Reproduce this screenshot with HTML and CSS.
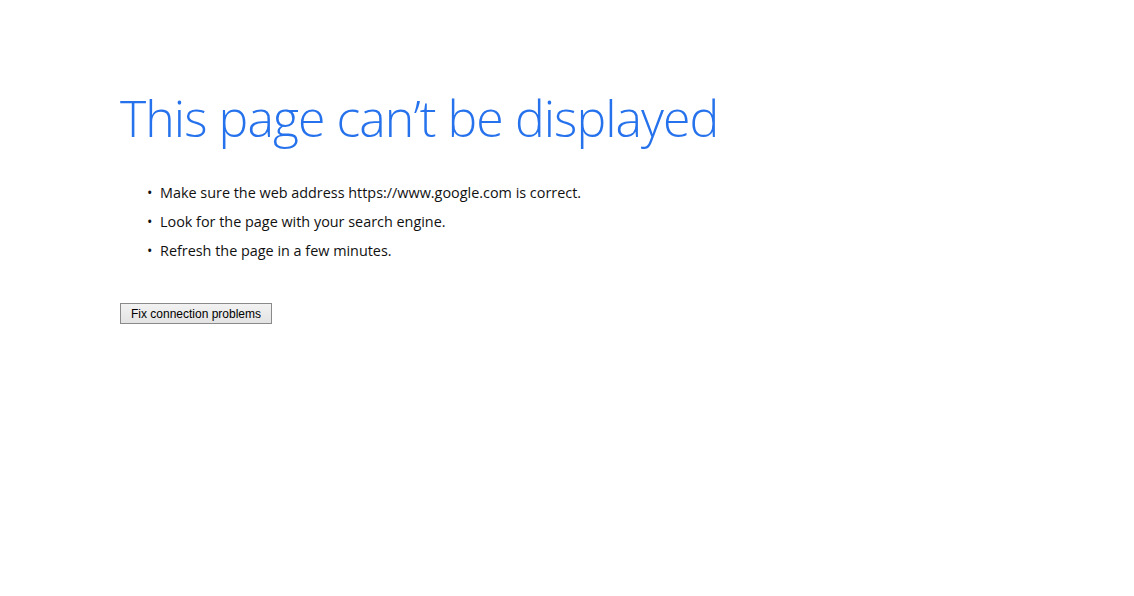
FILE: index.html
```html
<!DOCTYPE html>
<html>
<head>
<meta charset="utf-8">
<link rel="stylesheet" href="styles.css">
</head>
<body>
<main class="page">
  <h1 class="title">This page can’t be displayed</h1>
  <ul class="tips">
    <li>Make sure the web address https://www.google.com is correct.</li>
    <li>Look for the page with your search engine.</li>
    <li>Refresh the page in a few minutes.</li>
  </ul>
  <button class="fix" type="button">Fix connection problems</button>
</main>
</body>
</html>
```
FILE: styles.css
```css
html, body {
  margin: 0;
  padding: 0;
  background: #ffffff;
}
.page {
  padding: 84px 0 0 120px;
  display: flex;
  flex-direction: column;
  align-items: flex-start;
}
.title {
  margin: 0;
  font-family: "Open Sans", "Noto Sans", sans-serif;
  font-weight: 300;
  font-size: 50px;
  line-height: 68px;
  color: #2672ec;
  letter-spacing: -0.95px;
}
.tips {
  margin: 26px 0 0 0;
  padding: 0 0 0 27px;
  list-style: none;
  font-family: "Open Sans", "Noto Sans", sans-serif;
  font-size: 14.4px;
  color: #111;
}
.tips li {
  position: relative;
  padding-left: 13px;
  line-height: 29px;
}
.tips li::before {
  content: "•";
  position: absolute;
  left: 0;
  top: 0;
}
.fix {
  margin-top: 38px;
  width: 152px;
  height: 21px;
  padding: 0;
  font-family: "Liberation Sans", Arial, sans-serif;
  font-size: 12px;
  color: #000;
  background: linear-gradient(#f2f2f2, #e3e3e3);
  border: 1px solid #8a8a8a;
  border-radius: 0;
}
```
